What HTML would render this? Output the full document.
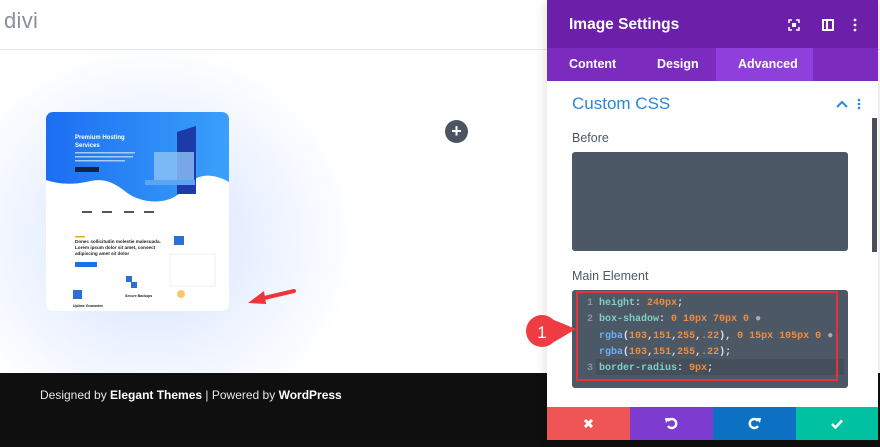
<!DOCTYPE html>
<html><head><meta charset="utf-8"><style>
*{margin:0;padding:0;box-sizing:border-box}
body{width:880px;height:447px;overflow:hidden;position:relative;background:#fff;font-family:"Liberation Sans",sans-serif}
.abs{position:absolute}
</style></head><body>
<div class="abs" style="left:0;top:0;width:880px;height:50px;background:#fff;border-bottom:1px solid #e6e8ec"></div>
<div class="abs" style="left:4px;top:8px;font-size:22px;color:#8a919b;font-weight:300;letter-spacing:.3px">divi</div>
<div class="abs" style="left:-60px;top:40px;width:420px;height:360px;background:radial-gradient(ellipse at 50% 55%,rgba(103,151,255,.30) 0%,rgba(103,151,255,.12) 40%,rgba(255,255,255,0) 70%)"></div>
<!-- card -->
<div class="abs" style="left:46px;top:112px;width:183px;height:199px;border-radius:7px;background:#fff;overflow:hidden">
 <svg width="183" height="199" viewBox="0 0 183 199">
  <defs><linearGradient id="g" x1="0" y1="0" x2="1" y2="0"><stop offset="0" stop-color="#1c6ef2"/><stop offset="1" stop-color="#3aa0fa"/></linearGradient></defs>
  <path d="M0 0H183V70C165 60 150 62 140 75C125 95 95 92 80 80C65 68 55 66 40 70C25 73 12 72 0 68Z" fill="url(#g)"/>
  <text x="29" y="27" font-size="6" font-weight="bold" fill="#fff" font-family="Liberation Sans">Premium Hosting</text>
  <text x="29" y="35" font-size="6" font-weight="bold" fill="#fff" font-family="Liberation Sans">Services</text>
  <rect x="29" y="40" width="60" height="1.5" fill="#a9cbfb"/><rect x="29" y="44" width="58" height="1.5" fill="#a9cbfb"/><rect x="29" y="48" width="50" height="1.5" fill="#a9cbfb"/>
  <rect x="29" y="55" width="24" height="5" fill="#13223f"/>
  <path d="M131 20L150 14V82H131Z" fill="#1c3aa8"/><rect x="108" y="40" width="40" height="30" fill="#8fc3f5" opacity=".8"/><rect x="99" y="68" width="50" height="5" fill="#5aa6f5"/>
  <rect x="36" y="99" width="10" height="2" fill="#555"/><rect x="56" y="99" width="10" height="2" fill="#555"/><rect x="78" y="99" width="10" height="2" fill="#555"/><rect x="98" y="99" width="10" height="2" fill="#555"/>
  <rect x="29" y="124" width="10" height="1.5" fill="#f5a623"/>
  <text x="29" y="131" font-size="4.6" font-weight="bold" fill="#222" font-family="Liberation Sans">Donec sollicitudin molestie malesuada.</text>
  <text x="29" y="137" font-size="4.6" font-weight="bold" fill="#222" font-family="Liberation Sans">Lorem ipsum dolor sit amet, consect</text>
  <text x="29" y="143" font-size="4.6" font-weight="bold" fill="#222" font-family="Liberation Sans">adipiscing amet sit dolor</text>
  <rect x="29" y="150" width="22" height="5" fill="#1c6ef2"/>
  <rect x="128" y="124" width="10" height="9" fill="#2a6fd6"/><rect x="124" y="142" width="45" height="32" fill="#fff" stroke="#eef" />
  <rect x="80" y="164" width="6" height="6" fill="#2a6fd6"/><rect x="85" y="170" width="6" height="6" fill="#2a6fd6"/>
  <rect x="27" y="178" width="9" height="9" fill="#2a6fd6"/><text x="27" y="195" font-size="3.5" font-weight="bold" fill="#222">Uptime Guarantee</text>
  <text x="79" y="185" font-size="3.5" font-weight="bold" fill="#222">Secure Backups</text>
  <circle cx="135" cy="182" r="4" fill="#f9c86a"/>
 </svg>
</div>
<!-- arrow -->
<svg class="abs" style="left:244px;top:284px" width="56" height="24"><path d="M50 7L16 15" stroke="#f0353a" stroke-width="4" stroke-linecap="round"/><path d="M4 19L20 7L22 20Z" fill="#f0353a"/></svg>
<!-- plus -->
<div class="abs" style="left:445px;top:120px;width:23px;height:23px;border-radius:50%;background:#4b5461;color:#fff;font-size:18px;font-weight:bold;line-height:23px;text-align:center">+</div>
<!-- footer -->
<div class="abs" style="left:0;top:373px;width:880px;height:74px;background:#0f0f0f"></div>
<div class="abs" style="left:40px;top:388px;font-size:12px;color:#e6e6e6">Designed by <b style="color:#fff">Elegant Themes</b> | Powered by <b style="color:#fff">WordPress</b></div>
<!-- panel -->
<div class="abs" style="left:547px;top:0;width:331px;height:440px;background:#fff;box-shadow:0 0 12px rgba(0,0,0,.15)"></div>
<div class="abs" style="left:547px;top:0;width:331px;height:48px;background:#6c1fa9"></div>
<div class="abs" style="left:569px;top:16px;font-size:15.5px;font-weight:bold;color:#fff">Image Settings</div>
<svg class="abs" style="left:788px;top:19px" width="12" height="12"><path d="M1 4V1H4M8 1H11V4M11 8V11H8M4 11H1V8" stroke="#fff" stroke-width="1.5" fill="none"/><rect x="4" y="4" width="4" height="4" fill="#fff"/></svg>
<svg class="abs" style="left:822px;top:19px" width="12" height="12"><rect x="1" y="1" width="10" height="10" fill="none" stroke="#fff" stroke-width="2"/><rect x="4" y="1" width="2" height="10" fill="#fff"/></svg>
<svg class="abs" style="left:852px;top:18px" width="6" height="14"><circle cx="3" cy="2" r="1.4" fill="#fff"/><circle cx="3" cy="7" r="1.4" fill="#fff"/><circle cx="3" cy="12" r="1.4" fill="#fff"/></svg>
<div class="abs" style="left:547px;top:48px;width:331px;height:33px;background:#7b2cbf"></div>
<div class="abs" style="left:716px;top:48px;width:97px;height:33px;background:#8e3fdc"></div>
<div class="abs" style="left:569px;top:57px;font-size:12.5px;font-weight:bold;color:#fff">Content</div>
<div class="abs" style="left:657px;top:57px;font-size:12.5px;font-weight:bold;color:#fff">Design</div>
<div class="abs" style="left:738px;top:57px;font-size:12.5px;font-weight:bold;color:#fff">Advanced</div>
<div class="abs" style="left:572px;top:94px;font-size:17px;color:#2b87da">Custom CSS</div>
<svg class="abs" style="left:836px;top:100px" width="12" height="8"><path d="M1 7L6 2L11 7" stroke="#2b87da" stroke-width="2" fill="none"/></svg>
<svg class="abs" style="left:857px;top:98px" width="4" height="12"><circle cx="2" cy="2" r="1.3" fill="#2b87da"/><circle cx="2" cy="6" r="1.3" fill="#2b87da"/><circle cx="2" cy="10" r="1.3" fill="#2b87da"/></svg>
<div class="abs" style="left:872px;top:118px;width:5px;height:134px;background:#4a4f57"></div>
<div class="abs" style="left:572px;top:131px;font-size:12.5px;color:#4c5866">Before</div>
<div class="abs" style="left:572px;top:152px;width:276px;height:99px;background:#4c5866;border-radius:3px"></div>
<div class="abs" style="left:572px;top:269px;font-size:12.5px;color:#4c5866">Main Element</div>
<div class="abs" style="left:572px;top:290px;width:276px;height:98px;background:#4c5866;border-radius:3px"></div>
<div class="abs" style="left:596px;top:359px;width:248px;height:16px;background:#454f5c"></div>
<div class="abs" style="left:576px;top:291px;width:262px;height:90px;border:2px solid #e8323a"></div>
<div class="abs" style="left:587px;top:296px;font-family:'Liberation Mono',monospace;font-size:10px;font-weight:bold;line-height:16.3px;color:#e0e0e0;white-space:pre"><span style="color:#8792a0">1 </span><span style="color:#7fd1c0">height</span>: <span style="color:#f08c3a">240px</span>;
<span style="color:#8792a0">2 </span><span style="color:#7fd1c0">box-shadow</span>: <span style="color:#f08c3a">0 10px 70px 0</span> <span style="color:#aab">●</span>
  <span style="color:#6ab0f0">rgba</span>(<span style="color:#f08c3a">103</span>,<span style="color:#f08c3a">151</span>,<span style="color:#f08c3a">255</span>,<span style="color:#f08c3a">.22</span>), <span style="color:#f08c3a">0 15px 105px 0</span> <span style="color:#aab">●</span>
  <span style="color:#6ab0f0">rgba</span>(<span style="color:#f08c3a">103</span>,<span style="color:#f08c3a">151</span>,<span style="color:#f08c3a">255</span>,<span style="color:#f08c3a">.22</span>);
<span style="color:#8792a0">3 </span><span style="color:#7fd1c0">border-radius</span>: <span style="color:#f08c3a">9px</span>;</div>
<!-- badge -->
<svg class="abs" style="left:520px;top:312px" width="60" height="38"><path d="M34 8L56 17L34 30Z" fill="#ef3b42"/><circle cx="22" cy="19" r="16" fill="#ef3b42"/><text x="22" y="26" font-size="17" fill="#fff" text-anchor="middle" font-family="Liberation Sans">1</text></svg>
<!-- buttons -->
<div class="abs" style="left:547px;top:407px;width:83px;height:33px;background:#ef5555"></div>
<div class="abs" style="left:630px;top:407px;width:83px;height:33px;background:#7e3bd0"></div>
<div class="abs" style="left:713px;top:407px;width:83px;height:33px;background:#0c71c3"></div>
<div class="abs" style="left:796px;top:407px;width:82px;height:33px;background:#00c1a0"></div>
<svg class="abs" style="left:583px;top:418px" width="11" height="11"><path d="M2 2L9 9M9 2L2 9" stroke="#fff" stroke-width="3"/></svg>
<svg class="abs" style="left:665px;top:417px" width="13" height="13"><path d="M3 4A4.5 4.5 0 1 1 3 9" stroke="#fff" stroke-width="2.4" fill="none"/><path d="M0 1L5 1L1 6Z" fill="#fff"/></svg>
<svg class="abs" style="left:748px;top:417px" width="13" height="13"><path d="M10 4A4.5 4.5 0 1 0 10 9" stroke="#fff" stroke-width="2.4" fill="none"/><path d="M13 1L8 1L12 6Z" fill="#fff"/></svg>
<svg class="abs" style="left:831px;top:419px" width="12" height="10"><path d="M1 5L4.5 8.5L11 1.5" stroke="#fff" stroke-width="2.6" fill="none"/></svg>
</body></html>
